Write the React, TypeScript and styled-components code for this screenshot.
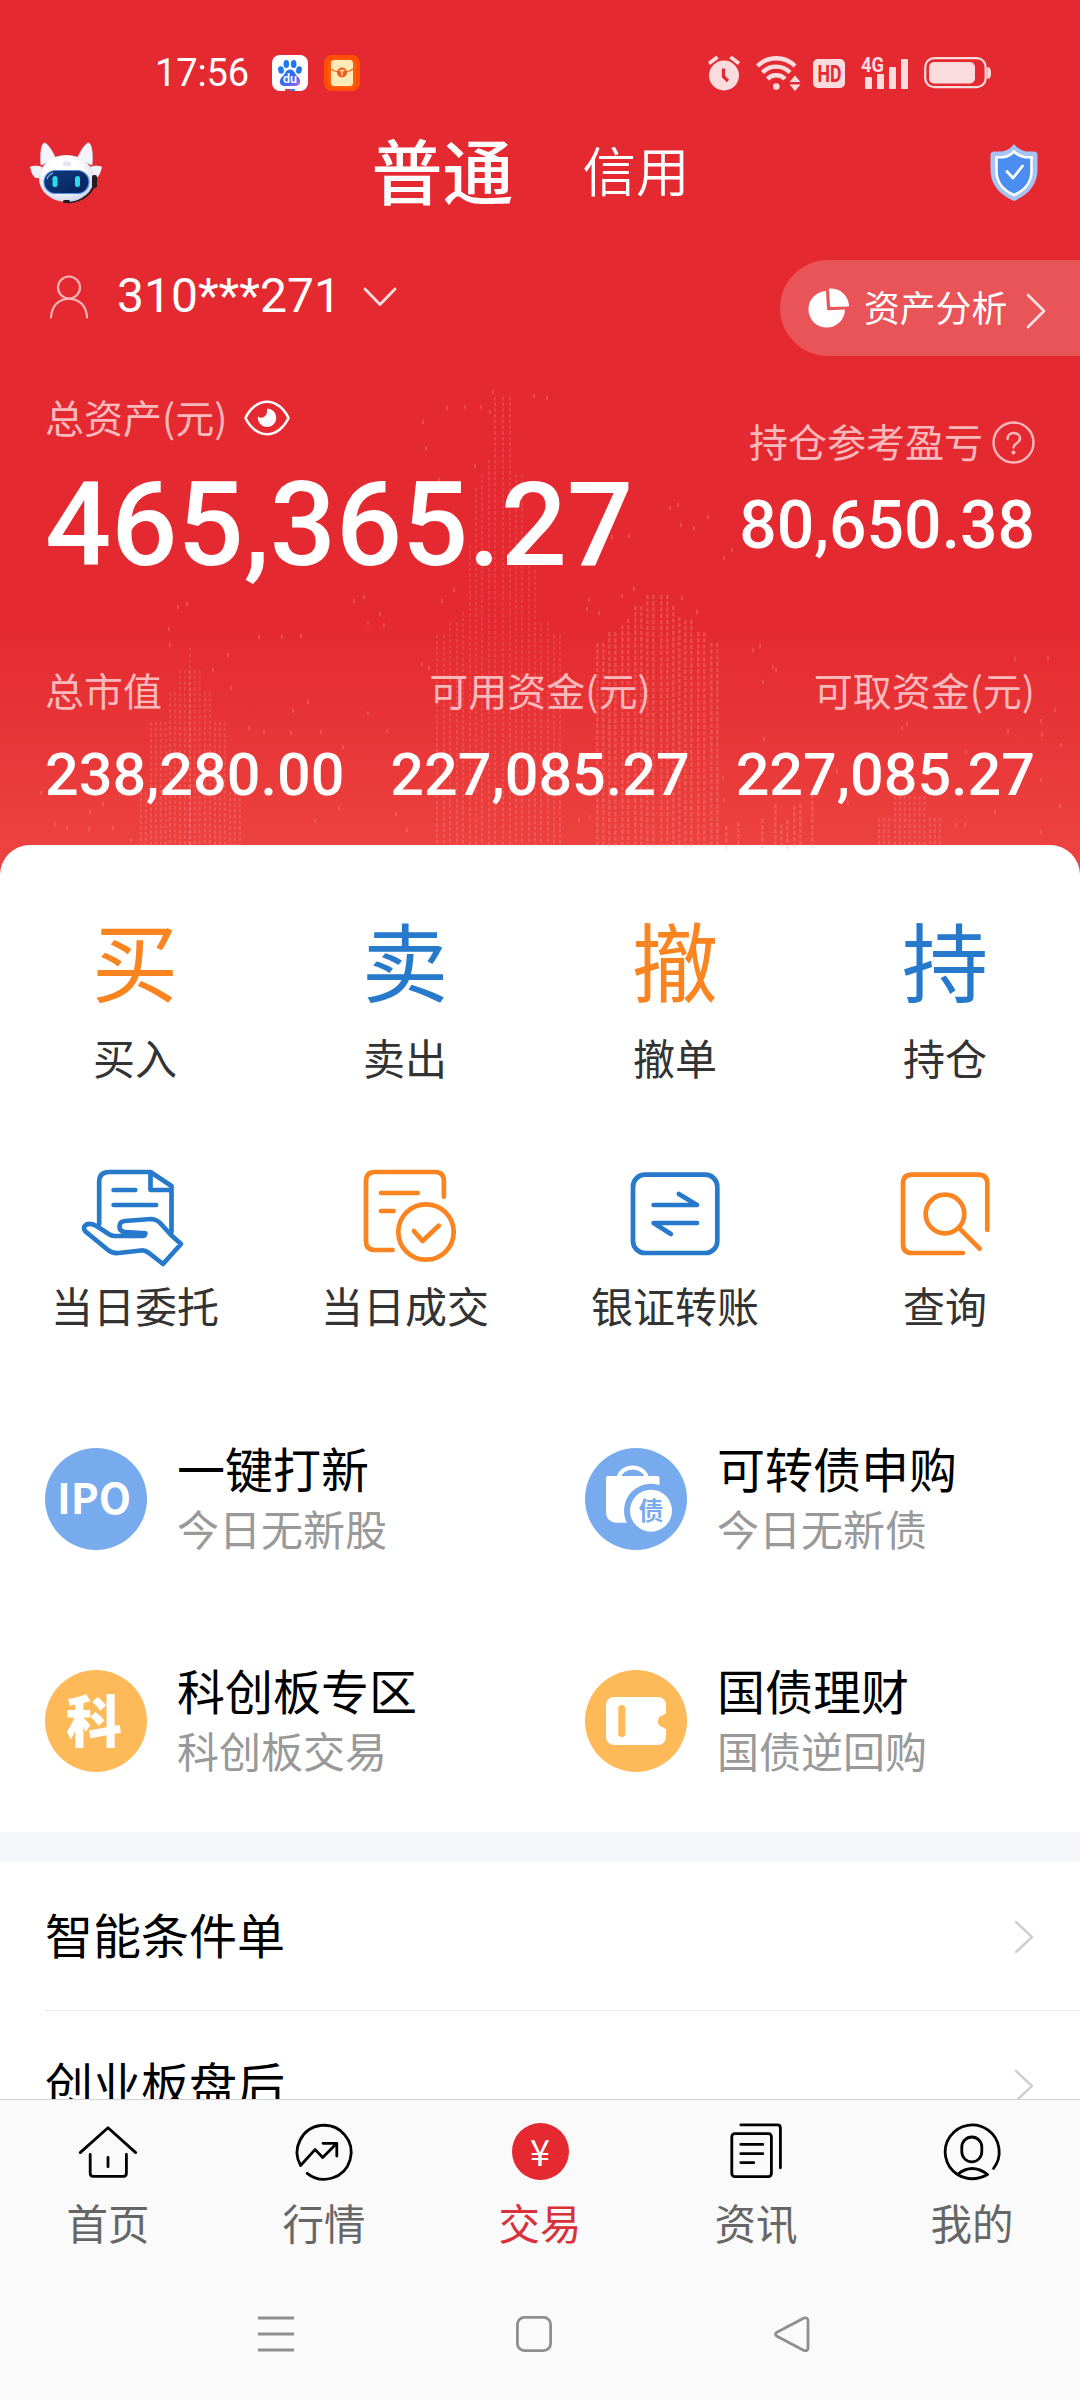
import React from "react";
import styled, { createGlobalStyle } from "styled-components";

const CJK = `"Noto Sans CJK SC", "Noto Sans", sans-serif`;
const LATIN = `Roboto, "Noto Sans CJK SC", sans-serif`;
const BLUE = "#2679cb";
const ORANGE = "#fa8420";
const RED = "#e42a30";

const GlobalStyle = createGlobalStyle`
  * { box-sizing: border-box; }
  html, body { margin: 0; padding: 0; }
  body { width: 1080px; height: 2400px; overflow: hidden; background: #fff; font-family: ${CJK}; }
  svg { display: block; flex: none; overflow: visible; }
`;

const Page = styled.div`
  width: 1080px;
  height: 2400px;
  display: flex;
  flex-direction: column;
  overflow: hidden;
  background: linear-gradient(180deg, ${RED} 0, ${RED} 625px, #ed4340 860px);
`;

const Header = styled.header`
  position: relative;
  height: 845px;
  flex: none;
  display: flex;
  flex-direction: column;
  color: #fff;
`;

const Backdrop = styled.svg`
  position: absolute;
  left: 0;
  top: 0;
  pointer-events: none;
`;

const Layer = styled.div`
  position: relative;
  display: flex;
  flex-direction: column;
`;

/* ---------- status bar ---------- */
const StatusBar = styled.div`
  height: 115px;
  padding: 31px 89px 0 155px;
  display: flex;
  align-items: center;
`;
const Clock = styled.span`
  font: 400 38px/44px ${LATIN};
  width: 117px;
  letter-spacing: -0.1px;
`;
const AppIcons = styled.div`
  display: flex;
  gap: 16px;
  flex: 1;
`;
const SystemIcons = styled.div`
  display: flex;
  align-items: center;
`;
const WifiSlot = styled.span`
  margin: 0 13px 0 16px;
`;
const SignalSlot = styled.span`
  margin: 0 16px 0 17px;
`;

/* ---------- title bar ---------- */
const TitleBar = styled.div`
  height: 110px;
  padding: 5px 42px 0 30px;
  display: grid;
  grid-template-columns: 120px 1fr 120px;
  align-items: center;
`;
const Tabs = styled.div`
  display: flex;
  align-items: center;
  justify-content: center;
  gap: 69px;
  padding-right: 7px;
`;
const Tab = styled.span<{ $active?: boolean }>`
  font-size: ${(p) => (p.$active ? 71 : 53.5)}px;
  font-weight: ${(p) => (p.$active ? 500 : 350)};
  line-height: 90px;
  margin-top: ${(p) => (p.$active ? -10 : -8)}px;
`;
const ShieldSlot = styled.div`
  display: flex;
  justify-content: flex-end;
`;

/* ---------- account ---------- */
const AccountRow = styled.div`
  height: 131px;
  padding: 35px 0 0 48px;
  display: flex;
  align-items: flex-start;
  justify-content: space-between;
`;
const Account = styled.div`
  height: 73px;
  display: flex;
  align-items: center;
`;
const AccountNo = styled.span`
  font: 400 48px/60px ${LATIN};
  margin: -2px 21px 0 27px;
`;
const AnalysisPill = styled.div`
  width: 300px;
  height: 96px;
  padding-left: 28px;
  border-radius: 48px 0 0 48px;
  background: rgba(255, 255, 255, 0.2);
  display: flex;
  align-items: center;
`;
const PillText = styled.span`
  font-size: 35.8px;
  line-height: 50px;
  margin: -5px 18px 0 14px;
  width: 144px;
  white-space: nowrap;
`;
const PillArrow = styled.span`
  margin-top: 5px;
`;

/* ---------- assets ---------- */
const Assets = styled.div`
  height: 306px;
  padding: 30px 45px 0;
  display: flex;
  justify-content: space-between;
`;
const AssetBlock = styled.div<{ $right?: boolean }>`
  display: flex;
  flex-direction: column;
  align-items: ${(p) => (p.$right ? "flex-end" : "flex-start")};
  padding-top: ${(p) => (p.$right ? 24 : 0)}px;
`;
const Label = styled.div`
  display: flex;
  align-items: center;
  height: 60px;
  font-size: 39px;
  line-height: 56px;
  color: #fbb9bc;
  white-space: nowrap;
`;
const LabelIcon = styled.span<{ $gap: number }>`
  margin: 4px 0 0 ${(p) => p.$gap}px;
`;
const Total = styled.div`
  font: 500 116.5px/120px ${LATIN};
  margin-top: 19px;
`;
const Profit = styled.div`
  font: 500 66px/80px ${LATIN};
  margin-top: 16px;
`;

const Stats = styled.div`
  padding: 0 45px;
  display: grid;
  grid-template-columns: 1fr 1fr 1fr;
`;
const Stat = styled.div<{ $align: string }>`
  text-align: ${(p) => p.$align};
`;
const StatLabel = styled.div`
  font-size: 39px;
  line-height: 54px;
  color: #fbb9bc;
  white-space: nowrap;
`;
const StatValue = styled.div`
  font: 500 59.3px/70px ${LATIN};
  margin-top: 24px;
  white-space: nowrap;
`;

/* ---------- sheet ---------- */
const Sheet = styled.main`
  height: 1254px;
  flex: none;
  overflow: hidden;
  background: #fff;
  border-radius: 30px 30px 0 0;
`;
const Actions = styled.div`
  padding-top: 58px;
  display: grid;
  grid-template-columns: repeat(4, 270px);
  row-gap: 63px;
`;
const Action = styled.div`
  height: 185px;
  display: flex;
  flex-direction: column;
  align-items: center;
`;
const ActionGlyph = styled.div<{ $color: string }>`
  height: 120px;
  font-size: 86.5px;
  line-height: 112px;
  font-weight: 400;
  color: ${(p) => p.$color};
`;
const ActionLabel = styled.div`
  margin-top: 4px;
  font-size: 42px;
  line-height: 60px;
  color: #333;
`;

const Features = styled.div`
  padding: 112px 0 60px 45px;
  display: grid;
  grid-template-columns: 540px 1fr;
  row-gap: 120px;
`;
const Feature = styled.div`
  height: 102px;
  display: flex;
  align-items: center;
  gap: 30px;
`;
const Round = styled.div<{ $bg: string }>`
  width: 102px;
  height: 102px;
  flex: none;
  border-radius: 50%;
  display: flex;
  align-items: center;
  justify-content: center;
  background: ${(p) => p.$bg};
  color: #fff;
`;
const RoundText = styled.span<{ $size: number; $weight: number }>`
  font-size: ${(p) => p.$size}px;
  font-weight: ${(p) => p.$weight};
  line-height: 1;
  margin: -6px 4px 0 0;
`;
const FeatureText = styled.div`
  display: flex;
  flex-direction: column;
  gap: 9px;
  padding-bottom: 4px;
`;
const FeatureTitle = styled.div`
  font-size: 48px;
  line-height: 52px;
  color: #000;
`;
const FeatureSub = styled.div`
  font-size: 42px;
  line-height: 52px;
  color: #999;
`;

const Band = styled.div`
  height: 30px;
  background: #f4f6fa;
`;
const Row = styled.div`
  height: 149px;
  margin-left: 45px;
  padding-right: 46px;
  display: flex;
  align-items: center;
  justify-content: space-between;
  border-bottom: 1px solid #e8e8e8;
`;
const RowText = styled.span`
  font-size: 48px;
  line-height: 60px;
  margin-top: -6px;
  color: #000;
`;
const RowArrow = styled.span`
  margin-top: 2px;
`;

/* ---------- bottom ---------- */
const TabBar = styled.nav`
  height: 163px;
  flex: none;
  padding-top: 22px;
  border-top: 1px solid #d2d3d5;
  background: #fafafa;
  display: grid;
  grid-template-columns: repeat(5, 216px);
`;
const NavItem = styled.div<{ $active?: boolean }>`
  display: flex;
  flex-direction: column;
  align-items: center;
  font-size: 41.5px;
  line-height: 60px;
  gap: 10px;
  color: ${(p) => (p.$active ? "#d9303a" : "#666")};
`;
const YenDisc = styled.div`
  width: 57px;
  height: 57px;
  margin: 1px 0 2px;
  border-radius: 50%;
  background: ${RED};
  color: #fff;
  font: 400 36px/55px ${CJK};
  text-align: center;
`;
const SystemNav = styled.div`
  flex: 1;
  padding: 52px 269px 0 257px;
  background: #fafafa;
  display: flex;
  justify-content: space-between;
  align-items: flex-start;
`;

/* ---------- skyline ---------- */
type Col = [x: number, top: number];
const span = (from: number, to: number, step: number, top: number): Col[] => {
  const out: Col[] = [];
  for (let x = from; x <= to; x += step) out.push([x, top]);
  return out;
};
const FAINT: Col[] = [
  ...span(141, 148, 4.9, 792),
  ...span(151, 166, 4.9, 722),
  ...span(170, 177, 4.9, 692),
  ...span(180, 202, 4.9, 670),
  ...span(205, 212, 4.9, 692),
  ...span(215, 227, 4.9, 722),
  ...span(230, 242, 4.9, 792),
  [190, 648],
  [437, 635], [444, 635], [450, 622], [457, 622], [463, 612], [470, 545], [476, 488],
  [482, 474], [489, 460], [495, 397], [503, 397], [510, 397], [516, 474], [522, 474],
  [529, 565], [535, 570], [541, 622], [548, 622], [554, 635], [560, 635],
  ...span(879, 893, 4.9, 818), ...span(895, 928, 4.9, 796), ...span(930, 942, 4.9, 818),
];
const STRONG: Col[] = [
  [597, 643], [603, 643], [609, 632], [615, 632], [622, 625], [628, 619], [635, 606], [641, 606],
  [647, 595], [653, 595], [661, 595], [667, 595], [673, 606], [679, 617], [685, 620], [691, 620],
  [698, 632], [704, 632], [711, 643], [717, 643], [726, 826], [738, 822], [762, 819], [775, 804],
  [781, 824], [787, 820], [794, 806], [800, 804], [812, 794],
];
const SPECKS: Col[] = [
  [447, 408], [465, 407], [481, 407], [490, 412], [493, 392], [423, 422], [426, 448], [475, 466], [439, 480],
  [534, 396], [547, 398], [178, 607], [187, 604], [169, 629], [170, 645], [354, 601], [364, 597], [368, 623],
  [380, 614], [384, 625], [259, 637], [282, 637], [301, 636], [228, 655], [213, 670], [231, 688], [308, 702],
  [293, 711], [249, 728], [264, 732], [291, 733], [321, 732], [387, 731], [343, 747], [368, 713], [422, 664],
  [429, 668], [339, 808], [315, 821], [396, 814], [407, 830], [90, 812], [55, 824], [67, 828], [89, 829],
  [113, 828], [41, 793], [103, 804], [131, 840], [442, 601], [454, 590], [670, 508], [678, 505], [681, 525],
  [694, 528], [708, 517], [629, 536], [612, 537], [724, 558], [732, 550], [634, 589], [622, 596], [682, 598],
  [697, 612], [599, 613], [587, 609], [589, 600], [753, 650], [760, 646], [773, 667], [776, 670], [763, 682],
  [1015, 659], [1048, 658], [1041, 721], [1055, 710], [1042, 735], [1008, 731], [1061, 745], [902, 728],
  [907, 724], [764, 739], [723, 778], [724, 800], [590, 817], [579, 820], [1041, 780], [1060, 806],
  [1041, 832], [956, 825], [965, 825], [837, 771], [848, 803], [995, 812], [966, 752],
];

const Skyline = () => (
  <Backdrop width="1080" height="845" viewBox="0 0 1080 845">
    <defs>
      <linearGradient id="haze" x1="0" y1="380" x2="0" y2="845" gradientUnits="userSpaceOnUse">
        <stop offset="0" stopColor="#fff" stopOpacity="0.12" />
        <stop offset="0.5" stopColor="#fff" stopOpacity="0.09" />
        <stop offset="1" stopColor="#fff" stopOpacity="0.13" />
      </linearGradient>
    </defs>
    <g fill="url(#haze)">
      {FAINT.map(([x, top]) =>
        Array.from({ length: Math.ceil((845 - top) / 5.7) }, (_, i) => (
          <rect key={`${x}-${i}`} x={x - 1} y={top + i * 5.7} width="2" height="3.4" />
        ))
      )}
    </g>
    <g fill="#ff9a90" fillOpacity="0.27">
      {STRONG.map(([x, top]) =>
        Array.from({ length: Math.ceil((845 - top) / 6.2) }, (_, i) => (
          <rect key={`${x}-${i}`} x={x - 1} y={top + i * 6.2} width="2.6" height="4.2" />
        ))
      )}
    </g>
    <g fill="#ff8a84" fillOpacity="0.34">
      {SPECKS.map(([x, y]) => (
        <ellipse key={`${x}-${y}`} cx={x} cy={y} rx="1.2" ry="2.6" />
      ))}
    </g>
  </Backdrop>
);

/* ---------- icons ---------- */
const BaiduIcon = () => (
  <svg width="36" height="36" viewBox="0 0 36 36">
    <defs>
      <linearGradient id="paw" x1="0" y1="0" x2="1" y2="1">
        <stop offset="0" stopColor="#1a7bf2" />
        <stop offset="0.6" stopColor="#3f66f5" />
        <stop offset="1" stopColor="#b46bf5" />
      </linearGradient>
    </defs>
    <rect width="36" height="36" rx="8" fill="#fff" />
    <g fill="#1f78f0">
      <ellipse cx="9" cy="15" rx="2.8" ry="3.8" transform="rotate(-12 9 15)" />
      <ellipse cx="14.3" cy="9" rx="2.8" ry="3.9" />
      <ellipse cx="21.7" cy="9" rx="2.8" ry="3.9" />
      <ellipse cx="27" cy="15" rx="2.8" ry="3.8" transform="rotate(12 27 15)" />
    </g>
    <path d="M18 14.5c4.5 0 4.500 4.500 7.500 7 4.500 4 3 9.500-2 9.500H12.500c-5 0-6.500-5.500-2-9.500 3-2.500 3-7 7.500-7z" fill="url(#paw)" />
    <text x="18" y="28" textAnchor="middle" fontFamily="Roboto" fontWeight="600" fontSize="12.500" fill="#fff">du</text>
    <rect x="13" y="34" width="5" height="2" fill="#e8344a" />
    <rect x="18" y="34" width="5" height="2" fill="#3d7bf0" />
  </svg>
);

const EnvelopeIcon = () => (
  <svg width="36" height="36" viewBox="0 0 36 36">
    <rect width="36" height="36" rx="8" fill="#fe4f06" />
    <rect x="4" y="4" width="28" height="29" rx="6" fill="#f86a12" opacity="0.6" />
    <rect x="7" y="5" width="22" height="26" rx="3.500" fill="#ffeab8" />
    <path d="M7 14c5 4 17 4 22 0" stroke="#ef6a20" strokeWidth="1.300" fill="none" />
    <circle cx="18" cy="17.500" r="5" fill="#ee5a1c" />
    <path d="M15.500 15.500h5M18 15.500v5" stroke="#ffdf9e" strokeWidth="1.500" />
  </svg>
);

const StatusIcons = () => (
  <SystemIcons>
    <svg width="32" height="36" viewBox="0 0 32 36">
      <circle cx="16" cy="20.500" r="15" fill="#fadcde" />
      <path d="M1 8.500 9.500 2M31 8.500 22.500 2" stroke="#fadcde" strokeWidth="3.500" />
      <path d="M15.500 13.500v8l4.500 4.500" stroke={RED} strokeWidth="3.200" fill="none" />
    </svg>
    <WifiSlot>
      <svg width="44" height="36" viewBox="0 0 44 36">
        <g fill="none" stroke="#fadcde" strokeWidth="4.400">
          <path d="M1.500 11a26.500 26.500 0 0 1 37.500 0" />
          <path d="M6.500 17.500a19 19 0 0 1 27.500 0" />
          <path d="M11.500 24a12 12 0 0 1 17.500 0" />
        </g>
        <circle cx="20.300" cy="31.500" r="3.300" fill="#fadcde" />
        <path d="M33.500 27h11l-5.500-6.500zM33.500 29.500h11L39 36z" fill="#fadcde" />
      </svg>
    </WifiSlot>
    <svg width="32" height="29" viewBox="0 0 32 29">
      <rect width="32" height="29" rx="5" fill="#fadcde" />
      <text x="4.500" y="23" fontFamily="Roboto" fontWeight="700" fontSize="23.500" textLength="24" lengthAdjust="spacingAndGlyphs" fill={RED}>HD</text>
    </svg>
    <SignalSlot>
      <svg width="46" height="36" viewBox="0 0 46 36">
        <g fill="#fadcde">
          <rect x="3" y="22" width="7" height="12" rx="1" />
          <rect x="15" y="19" width="7" height="15" rx="1" />
          <rect x="27" y="12" width="7" height="22" rx="1" />
          <rect x="39" y="4" width="7" height="30" rx="1" />
        </g>
        <text x="-1" y="16.500" fontFamily="Roboto" fontWeight="700" fontSize="21" textLength="23" lengthAdjust="spacingAndGlyphs" fill="#fadcde">4G</text>
      </svg>
    </SignalSlot>
    <svg width="67" height="32" viewBox="0 0 67 32">
      <rect x="1.200" y="1.200" width="60.500" height="29" rx="9" fill="none" stroke="#fadcde" strokeWidth="2.200" />
      <rect x="5" y="5" width="46" height="21.500" rx="5" fill="#fadcde" />
      <path d="M64 11c3 0 3 10 0 10z" fill="#fadcde" stroke="#fadcde" strokeWidth="1.500" />
    </svg>
  </SystemIcons>
);

const RobotIcon = () => (
  <svg width="72" height="62" viewBox="0 0 72 62">
    <defs>
      <radialGradient id="head" cx="0.45" cy="0.4" r="0.6">
        <stop offset="0.6" stopColor="#fff" />
        <stop offset="1" stopColor="#cfd4ec" />
      </radialGradient>
      <linearGradient id="visor" x1="0" y1="0" x2="1" y2="1">
        <stop offset="0" stopColor="#123a7e" />
        <stop offset="1" stopColor="#06235c" />
      </linearGradient>
    </defs>
    <path d="M66 36c-2 13-12 23-29 24" stroke="#2a1a22" strokeWidth="3" fill="none" />
    <path d="M0 25c4-2 9-1 12 0l-3 11c-5 1-7-3-9-11zM72 25c-4-2-9-1-12 0l3 11c5 1 7-3 9-11z" fill="#eef0fa" />
    <path d="M11 23C10 13 11 3 14 1c3-1 9 9 12 16zM62 23c1-10 0-20-3-22-3-1-9 9-12 16z" fill="#f3f4fc" stroke="#d5d9ee" strokeWidth="0.800" />
    <ellipse cx="36.500" cy="36.500" rx="27.500" ry="23.500" fill="url(#head)" />
    <rect x="33" y="19.500" width="8" height="4.500" rx="1.500" fill="#e3e5f4" />
    <rect x="14" y="28.500" width="45" height="23" rx="11.500" fill="url(#visor)" stroke="#4d8fe0" strokeWidth="1.200" />
    <path d="M17 37c1-3 3-5 6-6" stroke="#9db9e8" strokeWidth="1.200" fill="none" />
    <rect x="22.500" y="34" width="5" height="11" rx="2.500" fill="#29dcea" />
    <rect x="45" y="34" width="5" height="11" rx="2.500" fill="#29dcea" />
    <rect x="62" y="33" width="5" height="13" rx="2" fill="#231b24" />
    <rect x="33" y="58" width="7" height="3" rx="1.500" fill="#2a1a22" />
  </svg>
);

const ShieldIcon = () => (
  <svg width="48" height="57" viewBox="0 0 48 57">
    <path d="M24 0c3 4 7 6.500 12 7.500h8c2 0 3.500 1.500 3.500 3.500V26c0 14-9 25-23.500 31C9.500 51 .5 40 .5 26V11c0-2 1.500-3.500 3.500-3.500h8C17 6.500 21 4 24 0z" fill="#a5c3f4" />
    <path d="M24 7.500c3.500 3.500 7 5.200 11 5.700h6.500V27c0 11-7 19.500-17.500 24C13.500 46.500 6.500 38 6.500 27V13.200H13c4-.5 7.500-2.200 11-5.700z" fill="#4b8df0" stroke="#fff" strokeWidth="2.600" />
    <path d="m17 27.500 6 6.500 9.500-12" stroke="#fff" strokeWidth="2.800" fill="none" strokeLinecap="round" strokeLinejoin="round" />
  </svg>
);

const PersonIcon = () => (
  <svg width="42" height="44" viewBox="0 0 42 44" fill="none" stroke="#f7b3b6" strokeWidth="2.200" strokeLinecap="round">
    <circle cx="21" cy="12.500" r="11" />
    <path d="M3 42.500C3.500 31.500 10 23.800 21 23.800s17.500 7.700 18 18.700" />
  </svg>
);

const DownIcon = () => (
  <svg width="36" height="20" viewBox="0 0 36 20">
    <path d="m3 2 15 15.500L33 2" stroke="#fbdfe0" strokeWidth="2.800" fill="none" strokeLinecap="round" strokeLinejoin="round" />
  </svg>
);

const PieIcon = () => (
  <svg width="42" height="42" viewBox="0 0 42 42" fill="#fff">
    <path d="M18 4a18.300 18.300 0 1 0 19 18.500l-17 .8a1 1 0 0 1-1-1z" />
    <path d="M21 2.500a1 1 0 0 1 1-1C32 1 40.500 8.500 41 18.500a1 1 0 0 1-1 1l-17 .6a1 1 0 0 1-1-1z" />
  </svg>
);

const RightIcon = ({ color, w, h, s }: { color: string; w: number; h: number; s: number }) => (
  <svg width={w} height={h} viewBox={`0 0 ${w} ${h}`}>
    <path d={`M2 2 ${w - 2} ${h / 2} 2 ${h - 2}`} stroke={color} strokeWidth={s} fill="none" strokeLinecap="round" strokeLinejoin="round" />
  </svg>
);

const EyeIcon = () => (
  <svg width="46" height="36" viewBox="0 0 46 36">
    <path d="M1.500 18C6 8.500 14 1.800 23 1.800S40 8.500 44.500 18C40 27.500 32 34.200 23 34.200S6 27.500 1.500 18z" stroke="#fff" strokeWidth="2.600" fill="none" strokeLinejoin="round" />
    <path d="M23 8.500a9.300 9.300 0 1 1-9.200 8c3 2.500 7 1 8.500-2 .9-2 .9-4 .7-6z" fill="#fff" />
  </svg>
);

const HelpIcon = () => (
  <svg width="43" height="43" viewBox="0 0 43 43" fill="none" stroke="#fbb9bc" strokeWidth="2.400" strokeLinecap="round">
    <circle cx="21.500" cy="21.500" r="20" />
    <path d="M15.500 18c0-8.500 12.500-7.500 12.500-.5 0 4.500-6.500 5-6.500 9" />
    <circle cx="21.500" cy="31.500" r="0.800" fill="#fbb9bc" />
  </svg>
);

const LineIcon = ({ color, children }: { color: string; children: React.ReactNode }) => (
  <svg width="120" height="120" viewBox="0 0 120 120" fill="none" stroke={color} strokeWidth="4.700" strokeLinecap="round" strokeLinejoin="round">
    {children}
  </svg>
);

const EntrustIcon = () => (
  <LineIcon color={BLUE}>
    <path d="M24.200 73V31q0-10 10-10h41.300l21 14v46M75.500 21v18h21M38.600 39h21.700M38.600 54h42.500" />
    <path d="M68 85H40q-3 0-5.500-1.500L21.500 75q-5.500-3.500-10-1.500-4.500 3-1 7L33 99q4 3.500 10.500 3L66 99.500q4-.5 8 2.500l14 11 18-20-10-9-9.500-10.500q-4-5-10.500-5.500L50 70q-5.500.5-5.500 5.500t6 5.700l20 1.200q-.5 2.600-3 2.600z" />
  </LineIcon>
);
const DealIcon = () => (
  <LineIcon color={ORANGE}>
    <path d="M98.900 45.700V30q0-9-9-9H30q-9 0-9 9v60q0 9 9 9h17.600M35.900 42h36.800M35.900 60h12.700" />
    <circle cx="81" cy="81" r="27.700" />
    <path d="m68.900 80 8.600 10 16.200-15.300" />
  </LineIcon>
);
const TransferIcon = () => (
  <LineIcon color={BLUE}>
    <rect x="18" y="23.700" width="84.300" height="78.300" rx="12" />
    <path d="M38.600 54h43.400L63.800 43M82 72H38.600l17.300 11" />
  </LineIcon>
);
const QueryIcon = () => (
  <LineIcon color={ORANGE}>
    <path d="M102.300 79V32.700q0-9-9-9H27q-9 0-9 9V93q0 9 9 9h50.900" />
    <circle cx="60" cy="63" r="19.300" />
    <path d="m74.400 77.300 20.300 20.400" />
  </LineIcon>
);

const BagIcon = () => (
  <svg width="102" height="102" viewBox="0 0 102 102">
    <path d="M33.500 30a14.500 13 0 0 1 28.500 0" stroke="#fff" strokeWidth="4" fill="none" />
    <path d="M23 28h49.500a2 2 0 0 1 2 2v44.700H31a10 10 0 0 1-10-10V30a2 2 0 0 1 2-2z" fill="#fff" />
    <circle cx="66" cy="62.700" r="27" fill="#77abee" />
    <circle cx="66" cy="62.700" r="21" fill="#fff" />
    <text x="66" y="72" textAnchor="middle" fontFamily="Noto Sans CJK SC" fontWeight="700" fontSize="25" fill="#77abee">债</text>
  </svg>
);
const WalletIcon = () => (
  <svg width="102" height="102" viewBox="0 0 102 102">
    <rect x="21" y="27" width="60" height="48" rx="8" fill="#fff" />
    <rect x="33.300" y="35" width="7" height="32" rx="3.500" fill="#feb958" />
    <rect x="73" y="45" width="14" height="12.500" rx="6" fill="#feb958" />
    <rect x="79" y="44" width="6" height="14.500" fill="#feb958" />
  </svg>
);

const NavIcon = ({ children }: { children: React.ReactNode }) => (
  <svg width="60" height="60" viewBox="0 0 60 60" fill="none" stroke="#000" strokeWidth="2.800" strokeLinecap="round" strokeLinejoin="round">
    {children}
  </svg>
);

const actions = [
  { label: "买入", glyph: "买", color: ORANGE },
  { label: "卖出", glyph: "卖", color: BLUE },
  { label: "撤单", glyph: "撤", color: ORANGE },
  { label: "持仓", glyph: "持", color: BLUE },
  { label: "当日委托", icon: <EntrustIcon /> },
  { label: "当日成交", icon: <DealIcon /> },
  { label: "银证转账", icon: <TransferIcon /> },
  { label: "查询", icon: <QueryIcon /> },
];

const features = [
  { title: "一键打新", sub: "今日无新股", bg: "#77abee", icon: <RoundText $size={42} $weight={700}>IPO</RoundText> },
  { title: "可转债申购", sub: "今日无新债", bg: "#77abee", icon: <BagIcon /> },
  { title: "科创板专区", sub: "科创板交易", bg: "#feb958", icon: <RoundText $size={56} $weight={900}>科</RoundText> },
  { title: "国债理财", sub: "国债逆回购", bg: "#feb958", icon: <WalletIcon /> },
];

const stats = [
  { label: "总市值", value: "238,280.00", align: "left" },
  { label: "可用资金(元)", value: "227,085.27", align: "center" },
  { label: "可取资金(元)", value: "227,085.27", align: "right" },
];

export default function App() {
  return (
    <>
      <GlobalStyle />
      <Page>
        <Header>
          <Skyline />
          <Layer>
            <StatusBar>
              <Clock>17:56</Clock>
              <AppIcons>
                <BaiduIcon />
                <EnvelopeIcon />
              </AppIcons>
              <StatusIcons />
            </StatusBar>
            <TitleBar>
              <RobotIcon />
              <Tabs>
                <Tab $active>普通</Tab>
                <Tab>信用</Tab>
              </Tabs>
              <ShieldSlot>
                <ShieldIcon />
              </ShieldSlot>
            </TitleBar>
            <AccountRow>
              <Account>
                <PersonIcon />
                <AccountNo>310***271</AccountNo>
                <DownIcon />
              </Account>
              <AnalysisPill>
                <PieIcon />
                <PillText>资产分析</PillText>
                <PillArrow>
                  <RightIcon color="#fbe3e4" w={20} h={36} s={2.6} />
                </PillArrow>
              </AnalysisPill>
            </AccountRow>
            <Assets>
              <AssetBlock>
                <Label>
                  总资产(元)
                  <LabelIcon $gap={17}>
                    <EyeIcon />
                  </LabelIcon>
                </Label>
                <Total>465,365.27</Total>
              </AssetBlock>
              <AssetBlock $right>
                <Label>
                  持仓参考盈亏
                  <LabelIcon $gap={9}>
                    <HelpIcon />
                  </LabelIcon>
                </Label>
                <Profit>80,650.38</Profit>
              </AssetBlock>
            </Assets>
            <Stats>
              {stats.map((s) => (
                <Stat key={s.label} $align={s.align}>
                  <StatLabel>{s.label}</StatLabel>
                  <StatValue>{s.value}</StatValue>
                </Stat>
              ))}
            </Stats>
          </Layer>
        </Header>

        <Sheet>
          <Actions>
            {actions.map((a) => (
              <Action key={a.label}>
                {a.icon ?? <ActionGlyph $color={a.color!}>{a.glyph}</ActionGlyph>}
                <ActionLabel>{a.label}</ActionLabel>
              </Action>
            ))}
          </Actions>
          <Features>
            {features.map((f) => (
              <Feature key={f.title}>
                <Round $bg={f.bg}>{f.icon}</Round>
                <FeatureText>
                  <FeatureTitle>{f.title}</FeatureTitle>
                  <FeatureSub>{f.sub}</FeatureSub>
                </FeatureText>
              </Feature>
            ))}
          </Features>
          <Band />
          {["智能条件单", "创业板盘后"].map((t) => (
            <Row key={t}>
              <RowText>{t}</RowText>
              <RowArrow>
                <RightIcon color="#cfcfcf" w={20} h={34} s={2.4} />
              </RowArrow>
            </Row>
          ))}
        </Sheet>

        <TabBar>
          <NavItem>
            <NavIcon>
              <path d="M2.200 30.600 30 5.800l27.700 24.800M12.200 32.400v18.900q0 3 3 3h30.200q3 0 3-3V32.400M30 35.400v9.300" />
            </NavIcon>
            首页
          </NavItem>
          <NavItem>
            <NavIcon>
              <path d="M13.200 51.300A27 27 0 1 0 6.600 43.500L21 27.600l7.700 7.800 14.100-14.100M29 21.300h13.800V34" />
            </NavIcon>
            行情
          </NavItem>
          <NavItem $active>
            <YenDisc>¥</YenDisc>
            交易
          </NavItem>
          <NavItem>
            <NavIcon>
              <rect x="5.800" y="11.700" width="39.600" height="42.900" rx="3" />
              <path d="M14.800 2.800h36.600q3 0 3 3v40M14.800 22.400h22M14.800 31.700h22M14.800 40.600h13" />
            </NavIcon>
            资讯
          </NavItem>
          <NavItem>
            <NavIcon>
              <path d="M51.500 46.500A27 27 0 1 0 15.400 52.500Q30 61 45.600 52.500 30 40.500 15.400 52.500" />
              <rect x="19.800" y="15" width="20" height="24.800" rx="10" />
            </NavIcon>
            我的
          </NavItem>
        </TabBar>

        <SystemNav>
          <svg width="38" height="40" viewBox="0 0 38 40" stroke="#8f8f8f" strokeWidth="3">
            <path d="M1 4h36M1 20h36M1 36h36" />
          </svg>
          <svg width="38" height="40" viewBox="0 0 38 40" fill="none" stroke="#8f8f8f" strokeWidth="2.800">
            <rect x="2.400" y="3.400" width="33.200" height="33.200" rx="7" />
          </svg>
          <svg width="38" height="40" viewBox="0 0 38 40" fill="none" stroke="#8f8f8f" strokeWidth="2.800" strokeLinejoin="round">
            <path d="M3.500 18.500 31 4q4-1 4 3v27q0 3.500-4 2.500L3.500 22q-2-1.800 0-3.500z" />
          </svg>
        </SystemNav>
      </Page>
    </>
  );
}
